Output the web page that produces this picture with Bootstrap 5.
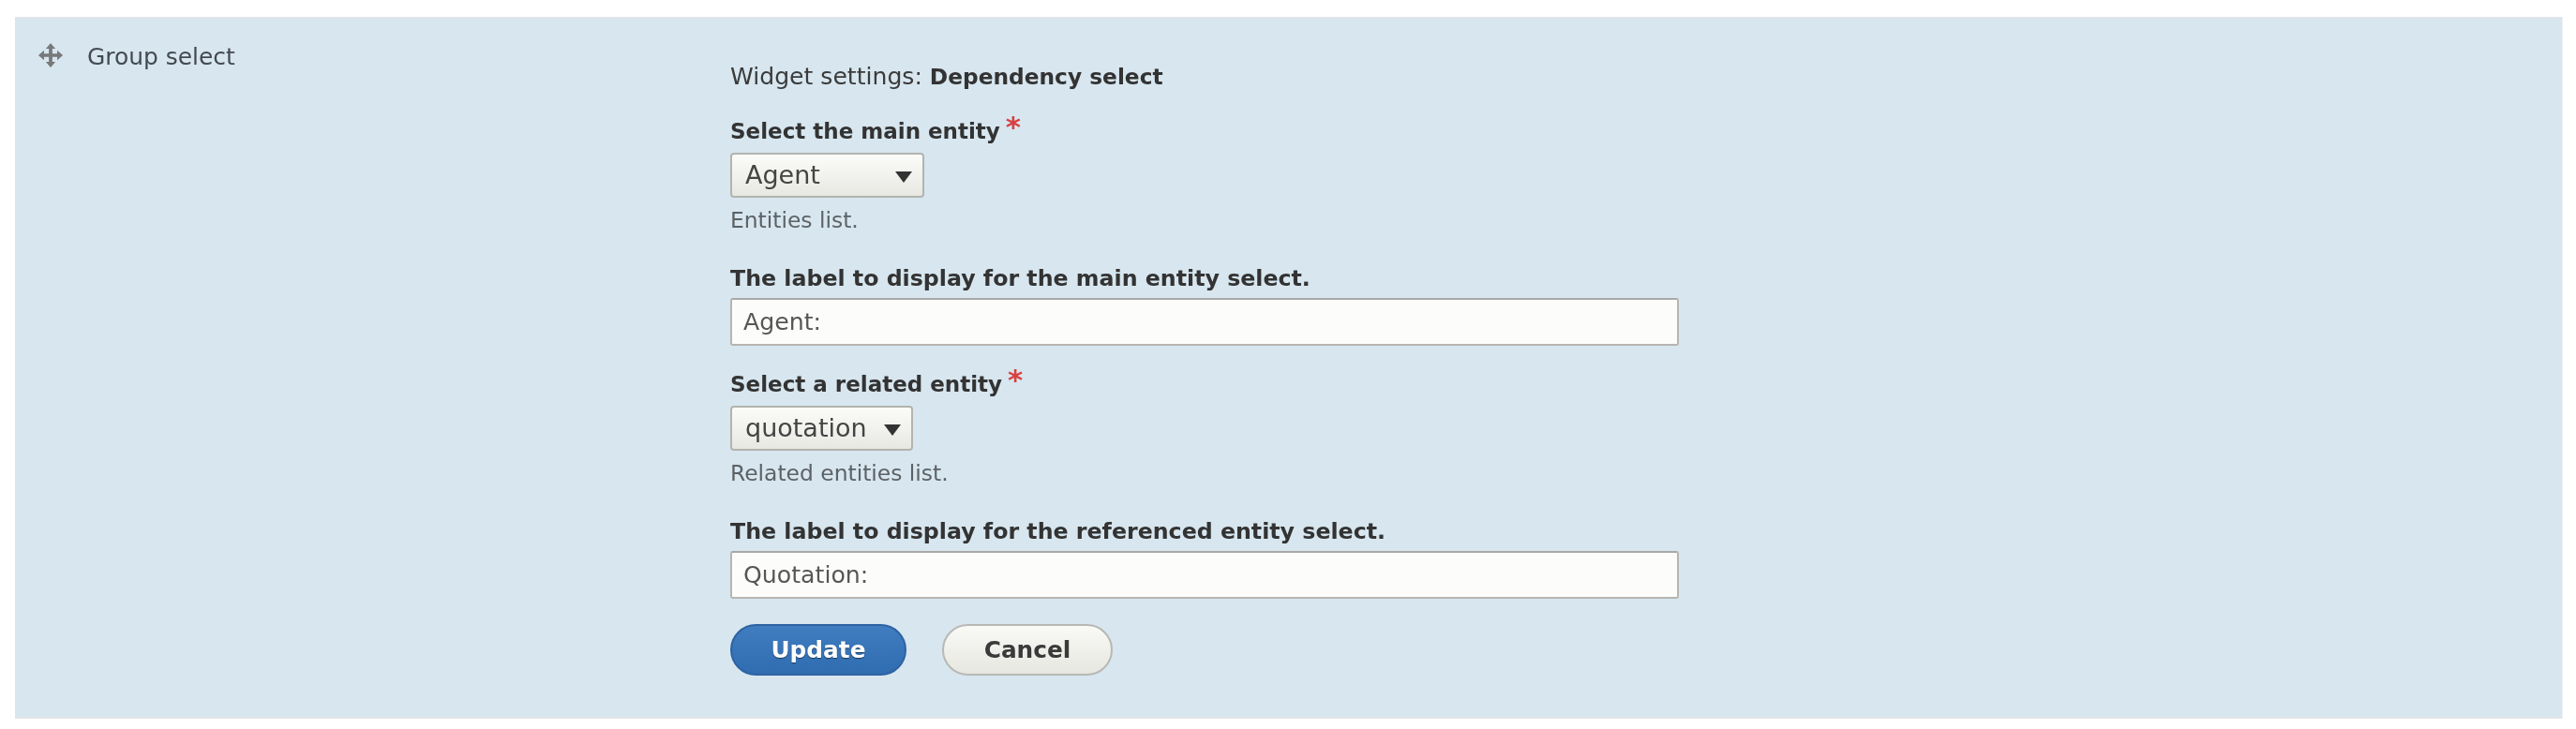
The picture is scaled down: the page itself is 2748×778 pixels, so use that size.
<!DOCTYPE html>
<html lang="en">
<head>
<meta charset="utf-8">
<title>Group select</title>
<link rel="stylesheet" href="https://cdn.jsdelivr.net/npm/bootstrap@5.3.0/dist/css/bootstrap.min.css">
<style>
html,body{background:#fff;height:778px;overflow:hidden}
body{font-family:"DejaVu Sans","Liberation Sans",sans-serif;color:#3b3b3b;font-size:25.100px;line-height:32px}
.row-panel{margin:18px 15px 0 16px;height:749px;background:#d7e6ef;border-top:1px solid #e6e6e6;border-bottom:2px solid #e2e5e7;box-shadow:1px 0 0 #eef1f3}
.panel-soft{filter:blur(.5px)}
.name-cell{width:763px;padding:26px 0 0 24px;flex:none}
.drag-icon{width:28px;height:28px;margin-right:25px;flex:none}
.name-text{color:#444a52;font-size:24.900px}
.form-cell{padding-top:47px;width:1012px}
.widget-title{margin-bottom:26px;height:32px}
.widget-title strong{font-weight:700;color:#333;font-size:23.300px}
.fld-label{display:block;font-weight:700;color:#333;font-size:23.700px;margin-bottom:5px;height:32px;white-space:nowrap}
.lbl-sel{font-size:23px;margin-bottom:7px}
.req{color:#d9403f;font-size:31px;line-height:20px;font-weight:700;margin-left:6px;vertical-align:2px}
.sel-box{height:48px;border:2px solid #b3b3af;border-radius:4px;background:linear-gradient(#fbfbf8,#e8e8e3);color:#444;font-size:27px;padding:0 11px 0 14px}
.sel-main{width:207px}
.sel-rel{width:195px}
.sel-arrow{width:0;height:0;border-left:9.500px solid transparent;border-right:9.500px solid transparent;border-top:12px solid #333;margin-top:3px}
.fld-desc{font-size:23.400px;color:#5c6266;margin-top:8px;height:32px}
.txt-box{height:51px;border:2px solid #b5b5b2;border-top-color:#a8a8a6;border-radius:3px;background:#fcfcfa;color:#565656;font-size:25.200px;padding:0 12px;width:1012px;box-shadow:none;outline:0;display:block}
.gap-a{margin-bottom:30px}
.gap-b{margin-bottom:25px}
.act-row{margin-top:27px}
.act-btn{height:55px;border-radius:28px;font-weight:700;font-size:24.800px;display:flex;align-items:center;justify-content:center;padding:0}
.btn-up{width:188px;background:linear-gradient(#3f7cc0,#2f6db0);border:2px solid #2d63a3;color:#fff;text-shadow:0 1px 1px rgba(0,0,0,.5);margin-right:38px}
.btn-cn{width:182px;background:linear-gradient(#f9f9f6,#e7e7e1);border:2px solid #b8b8b4;color:#3a3a3a}
</style>
</head>
<body>
<div class="row-panel panel-soft d-flex">
  <div class="name-cell d-flex align-items-start">
    <svg class="drag-icon" viewBox="0 0 30 30" aria-hidden="true"><path fill="#77797b" d="M15 1l5.500 6.500h-3.500v5.500h5.500V9.500L29 15l-6.500 5.500V17H17v5.500h3.500L15 29l-5.500-6.500H13V17H7.500v3.500L1 15l6.500-5.500V13H13V7.500H9.500z"/></svg>
    <span class="name-text">Group select</span>
  </div>
  <div class="form-cell">
    <div class="widget-title">Widget settings: <strong>Dependency select</strong></div>
    <label class="fld-label lbl-sel" for="s1">Select the main entity<span class="req">*</span></label>
    <div id="s1" class="sel-box sel-main d-flex align-items-center justify-content-between"><span>Agent</span><span class="sel-arrow"></span></div>
    <div class="fld-desc gap-a">Entities list.</div>
    <label class="fld-label" for="t1">The label to display for the main entity select.</label>
    <input id="t1" class="txt-box gap-b" type="text" value="Agent:">
    <label class="fld-label lbl-sel" for="s2">Select a related entity<span class="req">*</span></label>
    <div id="s2" class="sel-box sel-rel d-flex align-items-center justify-content-between"><span>quotation</span><span class="sel-arrow"></span></div>
    <div class="fld-desc gap-a">Related entities list.</div>
    <label class="fld-label" for="t2">The label to display for the referenced entity select.</label>
    <input id="t2" class="txt-box" type="text" value="Quotation:">
    <div class="d-flex act-row">
      <button type="button" class="btn act-btn btn-up">Update</button>
      <button type="button" class="btn act-btn btn-cn">Cancel</button>
    </div>
  </div>
</div>
<script src="https://cdn.jsdelivr.net/npm/bootstrap@5.3.0/dist/js/bootstrap.bundle.min.js"></script>
</body>
</html>
